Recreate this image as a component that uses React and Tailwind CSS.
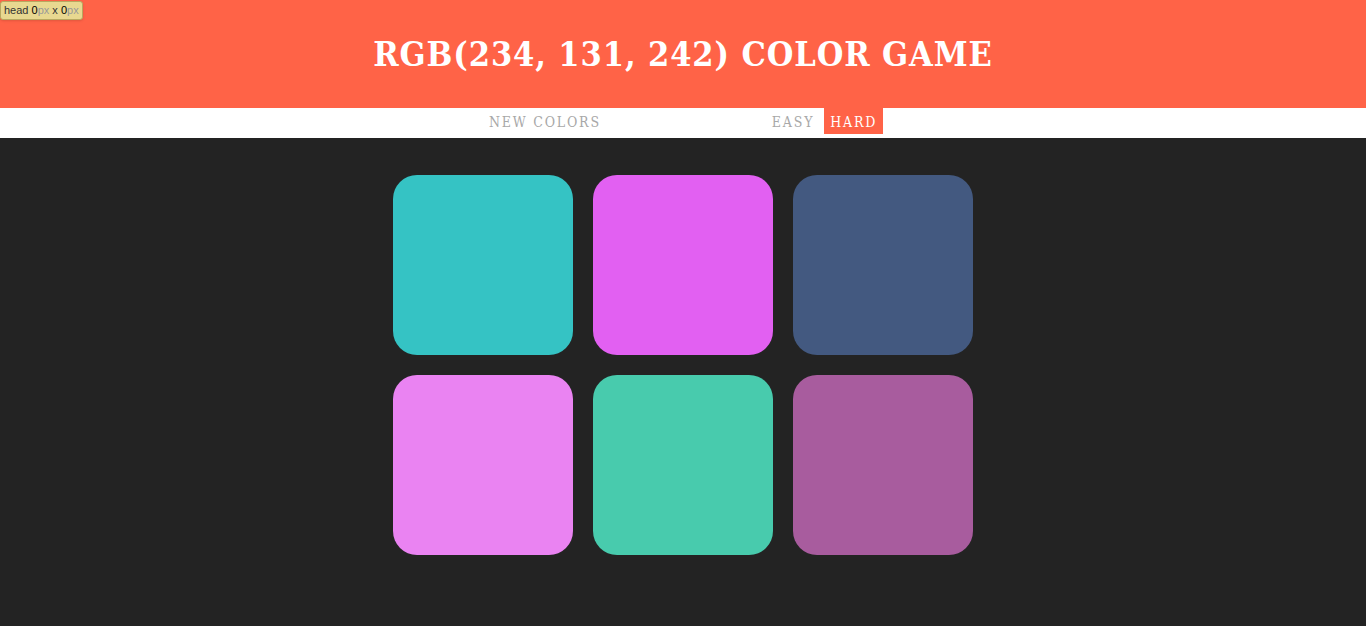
import React from "react";

const colors = [
  "rgb(53,195,196)",
  "rgb(226,96,242)",
  "rgb(67,89,128)",
  "rgb(234,131,242)",
  "rgb(72,203,173)",
  "rgb(168,92,158)",
];

export default function App() {
  return (
    <div className="min-h-[626px] bg-[#232323]" style={{ fontFamily: "'DejaVu Serif', serif" }}>
      <div className="relative h-[108px] bg-[#ff6347] flex items-center justify-center">
        <h1 className="text-white text-[34px] font-bold font-stretch-condensed tracking-[0.9px] leading-none">
          RGB(234, 131, 242) COLOR GAME
        </h1>
        <div className="absolute left-0 top-[1px] rounded-[3px] bg-[#e8d890] border border-[#b8a860] px-[3px] text-[11px] leading-[17px] text-[#333] shadow" style={{ fontFamily: "'Liberation Sans', sans-serif" }}>
          head <span className="text-black">0</span><span className="text-[#999]">px</span> x <span className="text-black">0</span><span className="text-[#999]">px</span>
        </div>
      </div>
      <div className="h-[30px] bg-white flex items-start justify-center">
        <button className="h-[26px] pt-[3px] px-[6px] text-[14px] font-stretch-condensed tracking-[1.8px] text-[#a8a8a8] uppercase">New Colors</button>
        <span className="w-[159px]" />
        <button className="h-[26px] pt-[3px] px-[6px] text-[14px] font-stretch-condensed tracking-[1.8px] text-[#a8a8a8] uppercase mr-[4px]">Easy</button>
        <button className="h-[26px] pt-[3px] px-[6px] text-[14px] font-stretch-condensed tracking-[1.8px] text-white bg-[#ff6347] uppercase">Hard</button>
      </div>
      <div className="w-[600px] mx-auto pt-[27px] flex flex-wrap">
        {colors.map((c, i) => (
          <div key={i} className="w-[180px] h-[180px] m-[10px] rounded-[24px]" style={{ backgroundColor: c }} />
        ))}
      </div>
    </div>
  );
}
